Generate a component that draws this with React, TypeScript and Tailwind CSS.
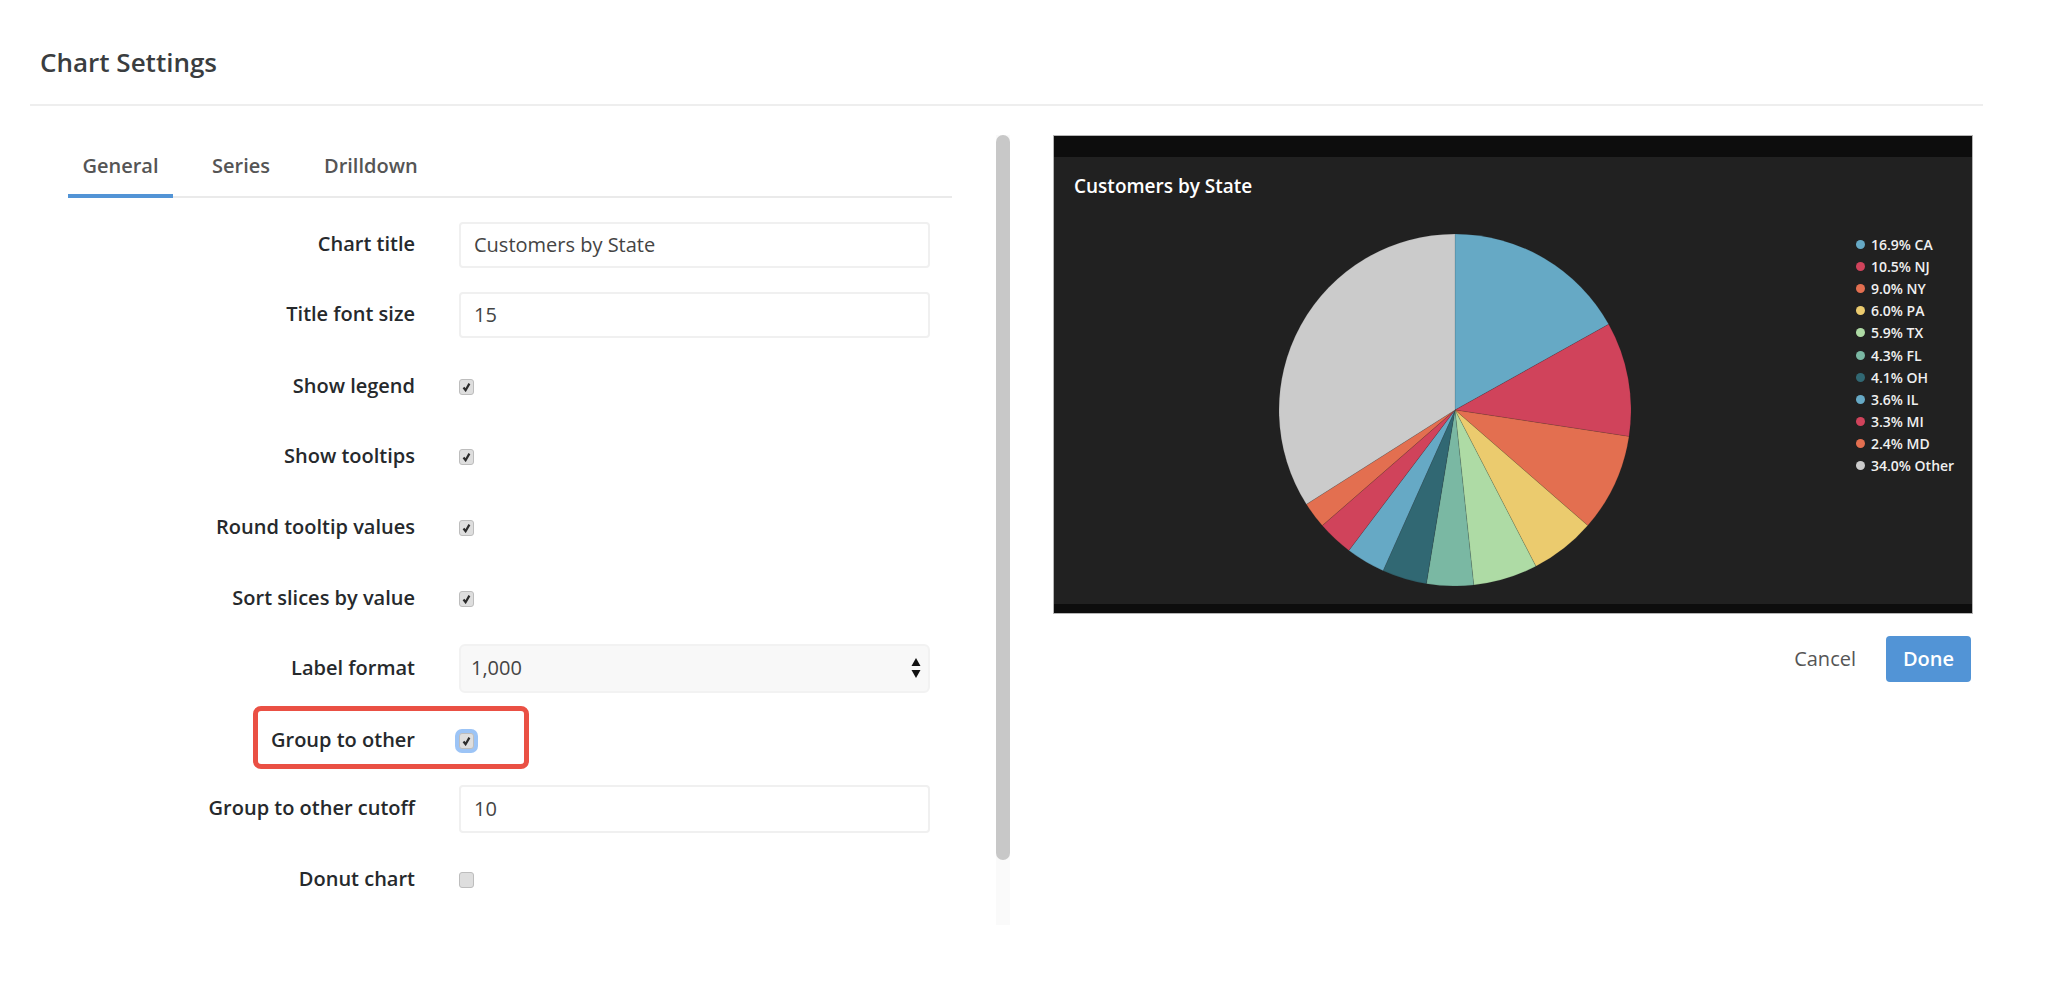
const slices = [
  { pct: 16.9, label: "16.9% CA", color: "#66a9c5" },
  { pct: 10.5, label: "10.5% NJ", color: "#d0435b" },
  { pct: 9.0, label: "9.0% NY", color: "#e36f50" },
  { pct: 6.0, label: "6.0% PA", color: "#ebcb6e" },
  { pct: 5.9, label: "5.9% TX", color: "#aedba5" },
  { pct: 4.3, label: "4.3% FL", color: "#7ab8a3" },
  { pct: 4.1, label: "4.1% OH", color: "#316873" },
  { pct: 3.6, label: "3.6% IL", color: "#66a9c5" },
  { pct: 3.3, label: "3.3% MI", color: "#d0435b" },
  { pct: 2.4, label: "2.4% MD", color: "#e36f50" },
  { pct: 34.0, label: "34.0% Other", color: "#cbcbcb" },
];

function Pie() {
  const r = 176;
  let start = 0;
  return (
    <svg width="352" height="352" viewBox="0 0 352 352" className="shrink-0">
      {slices.map((s) => {
        const end = start + (s.pct / 100) * Math.PI * 2;
        const x1 = r + r * Math.sin(start);
        const y1 = r - r * Math.cos(start);
        const x2 = r + r * Math.sin(end);
        const y2 = r - r * Math.cos(end);
        const large = end - start > Math.PI ? 1 : 0;
        start = end;
        return (
          <path
            key={s.label}
            d={`M${r} ${r} L${x1} ${y1} A${r} ${r} 0 ${large} 1 ${x2} ${y2} Z`}
            fill={s.color}
            stroke="#212121"
            strokeOpacity="0.25"
            strokeWidth="0.5"
          />
        );
      })}
    </svg>
  );
}

function Checkbox({ checked, focused }: { checked?: boolean; focused?: boolean }) {
  return (
    <span
      className={`flex h-[16px] w-[15px] items-center justify-center rounded-[3px] border border-[#bdbdbd] bg-[#dedede] ${
        focused ? "ring-[4px] ring-[#9cc4f6]" : ""
      }`}
    >
      {checked && (
        <svg width="9" height="10" viewBox="0 0 9 10">
          <path d="M1.5 5.5 L3.6 8.2 L7.4 1.6" fill="none" stroke="#2b2b2b" strokeWidth="2.2" />
        </svg>
      )}
    </span>
  );
}

function Label({ text }: { text: string }) {
  return <label className="w-[347px] shrink-0 pb-[2px] text-right text-[20px] font-semibold text-[#26292c]">{text}</label>;
}

function TextRow({ label, value, className }: { label: string; value: string; className: string }) {
  return (
    <div className={`flex items-center gap-[44px] ${className}`}>
      <Label text={label} />
      <input
        readOnly
        value={value}
        className="h-full w-[471px] rounded-[4px] border-2 border-[#f0f0f0] bg-white pb-[2px] pl-[13px] text-[20px] text-[#444] outline-none"
      />
    </div>
  );
}

function CheckRow({ label, checked, className }: { label: string; checked?: boolean; className: string }) {
  return (
    <div className={`flex h-[46px] items-center gap-[44px] ${className}`}>
      <Label text={label} />
      <Checkbox checked={checked} />
    </div>
  );
}

export default function App() {
  return (
    <div className="h-[982px] w-[2048px] overflow-hidden bg-white font-['Open_Sans',sans-serif]">
      <header className="ml-[30px] mr-[65px] flex h-[106px] items-center border-b-2 border-[#eeeeee] pl-[10px] pt-[20px]">
        <h1 className="text-[26px] font-semibold text-[#3a3d40]">Chart Settings</h1>
      </header>

      <div className="mt-[29px] flex pl-[68px]">
        <div className="w-[884px]">
          {/* tabs */}
          <div className="flex h-[63px] border-b-2 border-[#eaeaea] text-[20px] font-semibold text-[#555]">
            <div className="-mb-[2px] flex w-[105px] justify-center border-b-4 border-[#5294d6] pt-[16px]">General</div>
            <div className="ml-[39px] pt-[16px]">Series</div>
            <div className="ml-[54px] pt-[16px]">Drilldown</div>
          </div>

          <div className="relative pt-[24px]">
            <TextRow label="Chart title" value="Customers by State" className="h-[46px]" />
            <TextRow label="Title font size" value="15" className="mt-[24px] h-[46px]" />
            <CheckRow label="Show legend" checked className="mt-[26px]" />
            <CheckRow label="Show tooltips" checked className="mt-[24px]" />
            <CheckRow label="Round tooltip values" checked className="mt-[25px]" />
            <CheckRow label="Sort slices by value" checked className="mt-[25px]" />

            <div className="mt-[22px] flex h-[49px] items-center gap-[44px]">
              <Label text="Label format" />
              <div className="flex h-full w-[471px] items-center justify-between rounded-[6px] border-2 border-[#f2f2f2] bg-[#f8f8f8] pb-[1px] pl-[10px] pr-[7px] text-[20px] text-[#444]">
                <span>1,000</span>
                <svg width="10" height="20" viewBox="0 0 10 20">
                  <path d="M5 0 L9.5 8 L0.5 8 Z M0.5 12 L9.5 12 L5 20 Z" fill="#111" />
                </svg>
              </div>
            </div>

            <div className="relative mt-[25px] flex h-[46px] items-center gap-[44px]">
              <Label text="Group to other" />
              <Checkbox checked focused />
              {/* annotation drawn over the screenshot */}
              <div className="absolute left-[185px] top-[-12px] h-[63px] w-[276px] rounded-[8px] border-[5px] border-[#ea5044]" />
            </div>

            <TextRow label="Group to other cutoff" value="10" className="mt-[21px] h-[48px]" />
            <CheckRow label="Donut chart" className="mt-[24px]" />
          </div>
        </div>

        {/* scrollbar */}
        <div className="ml-[44px] h-[790px] w-[14px] bg-[#fafafa]">
          <div className="h-[725px] rounded-full bg-[#c8c8c8]" />
        </div>

        <div className="ml-[43px] w-[920px]">
          <div className="flex h-[479px] flex-col border border-[#b5b5b5] bg-[#212121]">
            <div className="h-[21px] bg-[#0d0d0d]" />
            <div className="flex flex-1">
              <div className="w-[225px] shrink-0 pl-[20px] pt-[17px] text-[19px] font-semibold leading-[25px] text-white">
                Customers by State
              </div>
              <div className="pt-[77px]">
                <Pie />
              </div>
              <ul className="ml-[225px] pt-[76px]">
                {slices.map((s) => (
                  <li key={s.label} className="flex h-[22.2px] items-center gap-[6px] text-[14px] font-semibold whitespace-nowrap text-[#f0f0f0]">
                    <span className="h-[9px] w-[9px] rounded-full" style={{ backgroundColor: s.color }} />
                    {s.label}
                  </li>
                ))}
              </ul>
            </div>
            <div className="h-[9px] bg-[#0d0d0d]" />
          </div>

          <div className="mt-[22px] flex items-center justify-end pr-[2px]">
            <button className="text-[20px] text-[#555]">Cancel</button>
            <button className="ml-[30px] h-[46px] w-[85px] rounded-[4px] bg-[#5294d6] text-[20px] font-semibold text-white">
              Done
            </button>
          </div>
        </div>
      </div>
    </div>
  );
}
